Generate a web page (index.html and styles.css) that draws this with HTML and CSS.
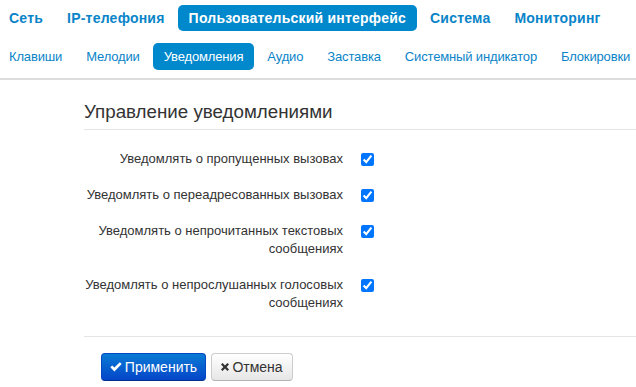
FILE: index.html
```html
<!DOCTYPE html>
<html lang="ru">
<head>
<meta charset="utf-8">
<link rel="stylesheet" href="styles.css">
</head>
<body>
<div class="header">
  <ul class="nav nav-main">
    <li><a href="#">Сеть</a></li>
    <li><a href="#">IP-телефония</a></li>
    <li class="active"><a href="#">Пользовательский интерфейс</a></li>
    <li><a href="#">Система</a></li>
    <li><a href="#">Мониторинг</a></li>
  </ul>
  <ul class="nav nav-sub">
    <li><a href="#">Клавиши</a></li>
    <li><a href="#">Мелодии</a></li>
    <li class="active"><a href="#">Уведомления</a></li>
    <li><a href="#">Аудио</a></li>
    <li><a href="#">Заставка</a></li>
    <li><a href="#">Системный индикатор</a></li>
    <li><a href="#">Блокировки</a></li>
  </ul>
</div>
<form class="content">
  <h2 class="legend">Управление уведомлениями</h2>
  <div class="rows">
    <div class="row">
      <label class="row-label" for="c1">Уведомлять о пропущенных вызовах</label>
      <input class="check" id="c1" type="checkbox" checked>
    </div>
    <div class="row">
      <label class="row-label" for="c2">Уведомлять о переадресованных вызовах</label>
      <input class="check" id="c2" type="checkbox" checked>
    </div>
    <div class="row">
      <label class="row-label" for="c3">Уведомлять о непрочитанных текстовых сообщениях</label>
      <input class="check" id="c3" type="checkbox" checked>
    </div>
    <div class="row">
      <label class="row-label" for="c4">Уведомлять о непрослушанных голосовых сообщениях</label>
      <input class="check" id="c4" type="checkbox" checked>
    </div>
  </div>
  <div class="actions">
    <button type="button" class="btn btn-primary">
      <svg class="icon icon-ok" width="12" height="10" viewBox="0 0 12 10"><path d="M0.3 5.3 L2.2 3.4 L4.4 5.6 L9.8 0.2 L11.7 2.1 L4.4 9.4 Z" fill="#fff"/></svg><span>Применить</span>
    </button>
    <button type="button" class="btn btn-default">
      <svg class="icon icon-x" width="8" height="8" viewBox="0 0 8 8"><path d="M0 1.6 L1.6 0 L4 2.4 L6.4 0 L8 1.6 L5.6 4 L8 6.4 L6.4 8 L4 5.6 L1.6 8 L0 6.4 L2.4 4 Z" fill="#333"/></svg><span>Отмена</span>
    </button>
  </div>
</form>
</body>
</html>
```
FILE: styles.css
```css
html, body {
  margin: 0;
  padding: 0;
  background: #fff;
  font-family: "Liberation Sans", Arial, sans-serif;
  color: #333;
  overflow: hidden;
}

.header {
  border-bottom: 2px solid #dddddd;
  padding: 5px 0 8px;
}

.nav {
  list-style: none;
  margin: 0 0 0 -2px;
  padding: 0;
  display: flex;
  gap: 2px;
  white-space: nowrap;
}

.nav a {
  display: block;
  text-decoration: none;
  color: #0a84c8;
  border-radius: 5px;
}

.nav .active a {
  background: #0088cc;
  color: #fff;
}

.nav-main a {
  font-size: 14px;
  font-weight: bold;
  line-height: 14px;
  letter-spacing: 0.22px;
  padding: 6px 11px;
}

.nav-sub {
  margin-top: 12px;
}

.nav-sub a {
  font-size: 13px;
  line-height: 13px;
  letter-spacing: -0.15px;
  padding: 7px 11px;
}

.content {
  margin: 0 0 0 84px;
}

.legend {
  margin: 20px 0 0;
  font-size: 18.75px;
  font-weight: normal;
  line-height: 24px;
  padding-bottom: 5px;
  border-bottom: 1px solid #e5e5e5;
  color: #333;
}

.rows {
  display: flex;
  flex-direction: column;
  gap: 18px;
  padding: 20px 0 24px;
  border-bottom: 1px solid #e5e5e5;
}

.row {
  display: flex;
  align-items: flex-start;
  gap: 18px;
}

.row-label {
  width: 259px;
  text-align: right;
  font-size: 13px;
  line-height: 18px;
  color: #333;
}

.check {
  width: 13px;
  height: 13px;
  margin: 3px 0 0;
}

.actions {
  display: flex;
  gap: 5px;
  padding: 16px 0 0 17px;
}

.btn {
  box-sizing: border-box;
  display: inline-flex;
  align-items: center;
  justify-content: center;
  height: 28px;
  padding: 0;
  font-family: "Liberation Sans", Arial, sans-serif;
  font-size: 14px;
  border-radius: 4px;
  cursor: pointer;
}

.btn .icon {
  flex-shrink: 0;
}

.icon-ok {
  margin-right: 3px;
}

.icon-x {
  margin-right: 3px;
}

.btn-primary {
  width: 105px;
  color: #fff;
  background: linear-gradient(#0a7ad4, #0446c9);
  border: 1px solid #0447c2;
  border-bottom-color: #02318a;
}

.btn-default {
  width: 82px;
  color: #333;
  background: linear-gradient(#ffffff, #e6e6e6);
  border: 1px solid #cccccc;
  border-bottom-color: #b3b3b3;
}
```
